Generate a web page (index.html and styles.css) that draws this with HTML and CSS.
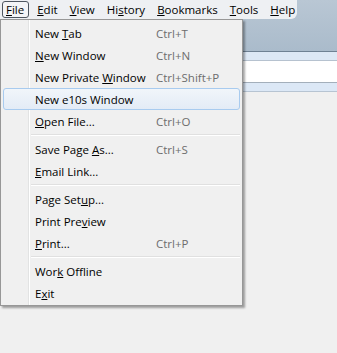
FILE: index.html
```html
<!DOCTYPE html>
<html lang="en">
<head>
    <meta charset="UTF-8">
    <title>File menu</title>
    <link rel="stylesheet" href="styles.css">
</head>
<body>
    <div class="titlebar">
        <div class="menubar">
            <div class="menu-title open"><u>F</u>ile</div>
            <div class="menu-title"><u>E</u>dit</div>
            <div class="menu-title"><u>V</u>iew</div>
            <div class="menu-title">Hi<u>s</u>tory</div>
            <div class="menu-title"><u>B</u>ookmarks</div>
            <div class="menu-title"><u>T</u>ools</div>
            <div class="menu-title"><u>H</u>elp</div>
        </div>
    </div>
    <div class="toolbar-top"></div>
    <div class="urlbar"></div>
    <div class="toolbar-bottom"></div>
    <div class="content"></div>

    <!-- dropdown of the File menu, sits over the window -->
    <div class="popup">
        <div class="item"><span class="label">New <u>T</u>ab</span><span class="key">Ctrl+T</span></div>
        <div class="item"><span class="label"><u>N</u>ew Window</span><span class="key">Ctrl+N</span></div>
        <div class="item"><span class="label">New Private <u>W</u>indow</span><span class="key">Ctrl+Shift+P</span></div>
        <div class="item hover"><span class="label">New e10s Window</span><span class="key"></span></div>
        <div class="item"><span class="label"><u>O</u>pen File...</span><span class="key">Ctrl+O</span></div>
        <div class="sep"></div>
        <div class="item"><span class="label">Save Page <u>A</u>s...</span><span class="key">Ctrl+S</span></div>
        <div class="item"><span class="label"><u>E</u>mail Link...</span><span class="key"></span></div>
        <div class="sep"></div>
        <div class="item"><span class="label">Page Set<u>u</u>p...</span><span class="key"></span></div>
        <div class="item"><span class="label">Print Pre<u>v</u>iew</span><span class="key"></span></div>
        <div class="item"><span class="label"><u>P</u>rint...</span><span class="key">Ctrl+P</span></div>
        <div class="sep"></div>
        <div class="item"><span class="label">Wor<u>k</u> Offline</span><span class="key"></span></div>
        <div class="item"><span class="label">E<u>x</u>it</span><span class="key"></span></div>
    </div>
</body>
</html>
```

FILE: styles.css
```css
* {
    margin: 0;
    padding: 0;
    box-sizing: border-box;
}
body {
    font-family: "Open Sans", "Noto Sans", sans-serif;
    font-size: 11.5px;
    color: #000;
    background-color: #f0f0f0;
    position: relative;
    height: 100vh;
    overflow: hidden;
}
u {
    text-decoration: underline;
    text-underline-offset: 1px;
}

/* window chrome */
.titlebar {
    height: 51px;
    background: linear-gradient(to bottom, #b9c7d4, #aabbcb);
}
.menubar {
    width: 297px;
    height: 19px;
    display: flex;
    align-items: center;
    padding-left: 2px;
    background-color: #eef0f3;
    border-bottom-right-radius: 6px;
}
.menu-title {
    height: 17px;
    line-height: 15px;
    padding: 0 5px;
    border: 1px solid transparent;
    border-radius: 3px;
}
.menu-title.open {
    border-color: #4e5660;
    background-color: #f4f5f7;
    padding: 0 4px 0 3px;
    margin-right: 2px;
}
.toolbar-top {
    height: 10px;
    border-top: 1px solid #6f8193;
    border-bottom: 1px solid #b6c2cf;
    background-color: #dde8f5;
}
.urlbar {
    height: 22px;
    background-color: #ffffff;
    border-bottom: 1px solid #a3afbb;
}
.toolbar-bottom {
    height: 9px;
    background-color: #dce8f6;
    border-bottom: 1px solid #b7c4d2;
}

/* popup menu */
.popup {
    position: absolute;
    top: 19px;
    left: 0;
    width: 243px;
    padding: 2px 2px 1px 2px;
    background-color: #f0f0f0;
    border: 1px solid #979797;
    box-shadow: 2px 2px 2px rgba(0, 0, 0, 0.35);
    background-image: linear-gradient(to right, transparent 27px, #e2e3e3 27px, #e2e3e3 28px, #ffffff 28px, #ffffff 29px, transparent 29px);
}
.item {
    display: flex;
    align-items: center;
    height: 22px;
    border: 1px solid transparent;
    border-radius: 3px;
}
.item.hover {
    border-color: #a8cbef;
    background: linear-gradient(to bottom, #f1f5fa, #e3ebf6);
}
.label {
    width: 121px;
    padding-left: 31px;
    box-sizing: content-box;
    white-space: nowrap;
}
.key {
    color: #6d6d6d;
    white-space: nowrap;
}
.sep {
    height: 6px;
    margin-left: 28px;
    display: flex;
    flex-direction: column;
    justify-content: center;
}
.sep::before {
    content: "";
    height: 1px;
    background-color: #e0e0e0;
}
.sep::after {
    content: "";
    height: 1px;
    background-color: #ffffff;
}
```
